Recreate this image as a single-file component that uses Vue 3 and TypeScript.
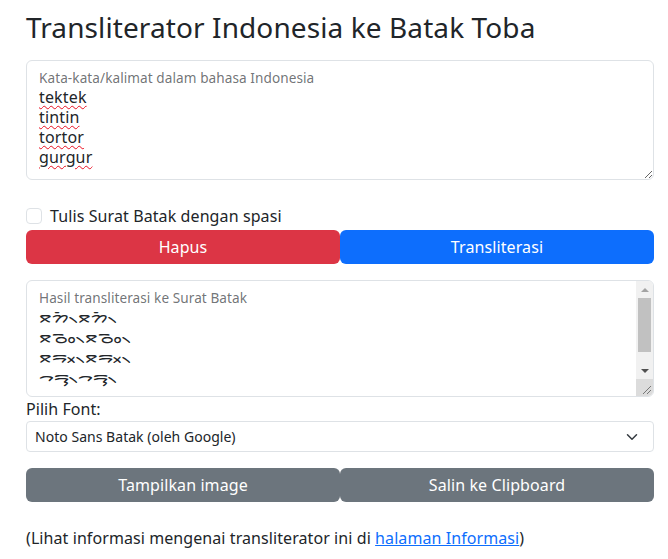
<script setup lang="ts">
const words = ['tektek', 'tintin', 'tortor', 'gurgur']
const batak = ['ᯖᯩᯂ᯲ᯖᯩᯂ᯲', 'ᯖᯪᯉ᯲ᯖᯪᯉ᯲', 'ᯖᯬᯒ᯲ᯖᯬᯒ᯲', 'ᯎᯮᯒ᯲ᯎᯮᯒ᯲']
</script>

<template>
  <main class="page">
    <h1 class="title">Transliterator Indonesia ke Batak Toba</h1>

    <div class="field input-field">
      <div class="float-label">Kata-kata/kalimat dalam bahasa Indonesia</div>
      <div class="word" v-for="w in words" :key="w"><span class="misspelled">{{ w }}</span></div>
    </div>

    <label class="check">
      <input type="checkbox" class="box" />
      <span>Tulis Surat Batak dengan spasi</span>
    </label>

    <div class="btn-row">
      <button class="btn danger">Hapus</button>
      <button class="btn primary">Transliterasi</button>
    </div>

    <div class="field output-field">
      <div class="float-label">Hasil transliterasi ke Surat Batak</div>
      <div class="batak" v-for="b in batak" :key="b">{{ b }}</div>
      <div class="scrollbar" aria-hidden="true">
        <div class="arrow-cell"><span class="arrow up"></span></div>
        <div class="track"><div class="thumb"></div></div>
        <div class="arrow-cell"><span class="arrow down"></span></div>
        <div class="corner">
          <svg width="17" height="17" viewBox="0 0 17 17">
            <path d="M15 7 L7 15 M15 11 L11 15" stroke="#777" stroke-width="1" fill="none" />
          </svg>
        </div>
      </div>
    </div>

    <div class="font-label">Pilih Font:</div>
    <div class="select">
      <span>Noto Sans Batak (oleh Google)</span>
      <svg width="12" height="12" viewBox="0 0 16 16">
        <path d="M2 5l6 6 6-6" fill="none" stroke="#343a40" stroke-width="2" stroke-linecap="round" stroke-linejoin="round" />
      </svg>
    </div>

    <div class="btn-row second">
      <button class="btn secondary">Tampilkan image</button>
      <button class="btn secondary">Salin ke Clipboard</button>
    </div>

    <p class="note">(Lihat informasi mengenai transliterator ini di <a href="#">halaman Informasi</a>)</p>
  </main>
</template>

<style>
html, body { margin: 0; background: #fff; }
</style>

<style scoped>
.page {
  box-sizing: border-box;
  width: 668px;
  height: 559px;
  padding: 8px 14px 0 26px;
  font-family: "Noto Sans", sans-serif;
  font-size: 16px;
  color: #212529;
  overflow: hidden;
}
.title {
  margin: 0 0 13px;
  font-size: 28px;
  font-weight: 400;
  line-height: 39px;
  letter-spacing: 0.1px;
}
.field {
  position: relative;
  box-sizing: border-box;
  border: 1px solid #dee2e6;
  border-radius: 6px;
  background: #fff;
  padding: 8px 12px;
  overflow: hidden;
}
.input-field {
  height: 120px;
  resize: vertical;
  line-height: 20px;
}
.float-label {
  font-size: 13.6px;
  line-height: 18px;
  letter-spacing: 0.07px;
  color: rgba(33, 37, 41, 0.65);
}
.misspelled {
  letter-spacing: 0.15px;
  text-decoration: underline wavy #e81123 0.7px;
  text-underline-offset: 2px;
}
.check {
  display: flex;
  align-items: center;
  gap: 8px;
  margin-top: 24px;
  height: 24px;
  line-height: 24px;
  letter-spacing: 0.1px;
}
.box {
  appearance: none;
  margin: 0;
  width: 16px;
  height: 16px;
  border: 1px solid #dee2e6;
  border-radius: 4px;
  background: #fff;
}
.btn-row {
  display: flex;
  margin-top: 2px;
}
.btn {
  flex: 1 1 0;
  height: 34px;
  border: 0;
  border-radius: 6px;
  padding: 0;
  color: #fff;
  font-family: inherit;
  font-size: 16px;
  letter-spacing: 0.1px;
}
.danger { background: #dc3545; }
.primary { background: #0d6efd; }
.secondary { background: #6c757d; }
.output-field {
  height: 117px;
  margin-top: 16px;
  line-height: 20px;
}
.batak {
  font-size: 16px;
  line-height: 20px;
}
.scrollbar {
  position: absolute;
  top: 0;
  right: 0;
  bottom: 0;
  width: 17px;
  display: flex;
  flex-direction: column;
  background: #f1f1f1;
}
.arrow-cell {
  flex: 0 0 17px;
  display: flex;
  align-items: center;
  justify-content: center;
}
.arrow {
  width: 0;
  height: 0;
  border-left: 4px solid transparent;
  border-right: 4px solid transparent;
}
.arrow.up { border-bottom: 4px solid #a3a3a3; }
.arrow.down { border-top: 4px solid #505050; }
.track {
  flex: 1;
  padding: 0 2px;
}
.thumb {
  height: 54px;
  background: #c1c1c1;
}
.corner {
  flex: 0 0 17px;
  height: 17px;
  background: #dcdcdc;
}
.corner svg { display: block; }
.font-label {
  line-height: 24px;
  letter-spacing: 0.05px;
}
.select {
  box-sizing: border-box;
  display: flex;
  align-items: center;
  justify-content: space-between;
  height: 31px;
  border: 1px solid #dee2e6;
  border-radius: 4px;
  padding: 0 15px 0 8px;
  font-size: 14px;
  letter-spacing: 0.03px;
}
.second { margin-top: 16px; }
.note {
  margin: 24px 0 0;
  line-height: 24px;
  letter-spacing: 0.08px;
}
.note a { color: #0d6efd; text-decoration: underline; }
</style>
